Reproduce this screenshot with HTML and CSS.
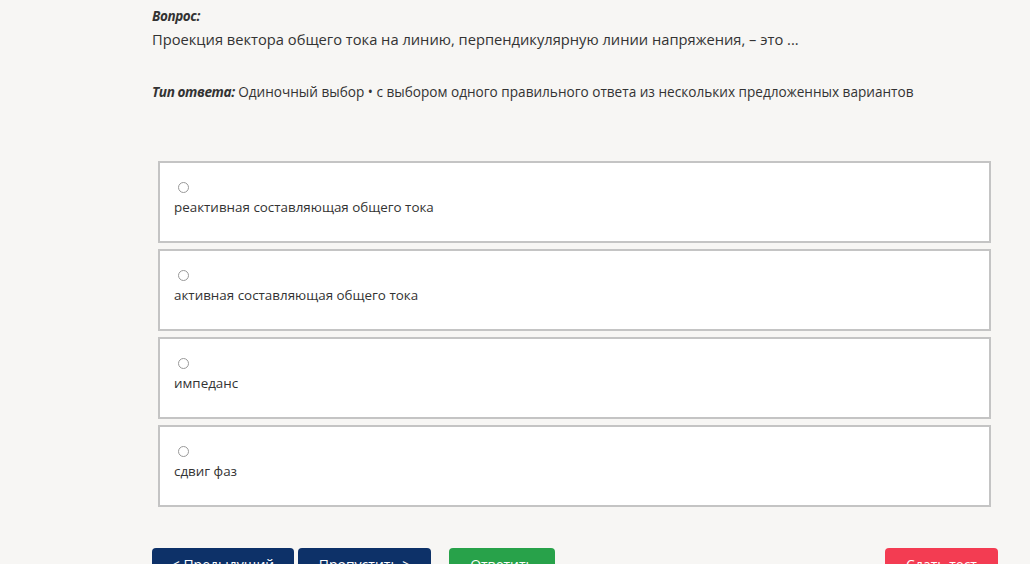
FILE: index.html
```html
<!DOCTYPE html>
<html lang="ru">
  <head>
    <meta charset="UTF-8" />
    <meta name="viewport" content="width=device-width, initial-scale=1.0" />
    <title>Тест</title>
    <link rel="stylesheet" href="styles.css">
  </head>
  <body>
    <div id="testcontainer">
      <div class="question">
        <div class="label">Вопрос:</div>
        <p class="questiontext">Проекция вектора общего тока на линию, перпендикулярную линии напряжения, – это ...</p>
      </div>
      <p class="answertype"><span class="label">Тип ответа:</span> Одиночный выбор • с выбором одного правильного ответа из нескольких предложенных вариантов</p>

      <div class="options">
        <label class="option">
          <input type="radio" name="answer" />
          <span>реактивная составляющая общего тока</span>
        </label>
        <label class="option">
          <input type="radio" name="answer" />
          <span>активная составляющая общего тока</span>
        </label>
        <label class="option">
          <input type="radio" name="answer" />
          <span>импеданс</span>
        </label>
        <label class="option">
          <input type="radio" name="answer" />
          <span>сдвиг фаз</span>
        </label>
      </div>

      <div class="buttons">
        <button class="btn navy prev">&lt; Предыдущий</button>
        <button class="btn navy skip">Пропустить &gt;</button>
        <button class="btn green answer">Ответить</button>
        <button class="btn red finish">Сдать тест</button>
      </div>
    </div>
  </body>
</html>
```

FILE: styles.css
```css
* {
  box-sizing: border-box;
  margin: 0;
  padding: 0;
}
body {
  font-family: "Open Sans", "Noto Sans", sans-serif;
  background: #f7f6f4;
  color: #333;
  overflow: hidden;
}
#testcontainer {
  padding: 6px 32px 0 152px;
}
.label {
  font-weight: 700;
  font-style: italic;
  font-size: 13.5px;
  letter-spacing: -0.4px;
}
.question .label {
  line-height: 20px;
}
.questiontext {
  font-size: 14.7px;
  line-height: 24px;
  margin-top: 1px;
}
.answertype {
  font-size: 13.6px;
  margin-top: 31px;
  line-height: 20px;
}
.answertype .label {
  font-size: 13.6px;
  letter-spacing: -0.4px;
}
.options {
  display: flex;
  flex-direction: column;
  gap: 6px;
  margin: 59px 7px 0 6px;
}
.option {
  display: flex;
  flex-direction: column;
  align-items: flex-start;
  height: 82px;
  padding: 19px 14px 0 14px;
  background: #fff;
  border: 2px solid #c4c4c4;
  font-size: 13.4px;
  line-height: 18px;
}
.option input {
  appearance: none;
  width: 11px;
  height: 11px;
  border: 1px solid #999;
  border-radius: 50%;
  margin: 0 0 5px 4px;
  background: #fff;
}
.buttons {
  display: flex;
  align-items: flex-start;
  margin-top: 41px;
  width: 846px;
  height: 16px;
}
.btn {
  padding: 8px 0 10px;
  border: none;
  border-radius: 4px;
  color: #fff;
  font-family: inherit;
  font-size: 14px;
  line-height: 18px;
  white-space: nowrap;
}
.navy {
  background: #0d3168;
}
.prev {
  width: 142px;
}
.skip {
  width: 133px;
  margin-left: 4px;
}
.green {
  background: #28a24a;
  width: 106px;
  margin-left: 18px;
}
.red {
  background: #f33c52;
  width: 113px;
  margin-left: auto;
}
```
